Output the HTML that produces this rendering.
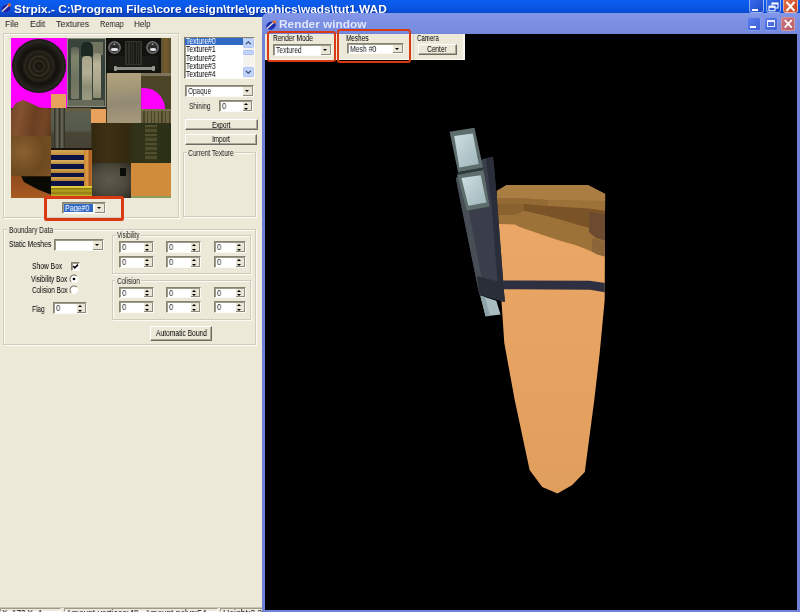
<!DOCTYPE html>
<html><head><meta charset="utf-8">
<style>
*{box-sizing:border-box;margin:0;padding:0}
html,body{width:800px;height:612px;overflow:hidden;background:#ece9d8}
body{position:relative;font-family:"Liberation Sans",sans-serif;font-size:8.5px;color:#000}
.a{position:absolute}
.t{position:absolute;white-space:nowrap;line-height:1;transform-origin:0 50%;will-change:transform}
.sunk{border:1px solid;border-color:#85836f #fbfaf4 #fbfaf4 #85836f;box-shadow:inset 1px 1px 0 #9c9a8a}
.rbtn{background:#ece9d8;border:1px solid;border-color:#fff #6e6c60 #6e6c60 #fff}
.btn{background:#ece9d8;border:1px solid;border-color:#fff #6e6c60 #6e6c60 #fff;box-shadow:inset -1px -1px 0 #aca899}
.grp{border:1px solid #cfccbb;box-shadow:inset 1px 1px 0 #fbfaf4,1px 1px 0 #fbfaf4}
</style></head><body>

<div class="a" style="left:0px;top:0px;width:800px;height:17px;background:linear-gradient(#0b5df0 0,#0a5ae8 30%,#0850dc 60%,#0a47c8 85%,#0f3fb0 100%)"></div>
<svg class="a" style="left:1px;top:3px" width="11" height="10" viewBox="0 0 11 10"><ellipse cx="5" cy="5.6" rx="5" ry="3.9" fill="#1722a6" stroke="#3c58d8" stroke-width=".5" transform="rotate(-25 5 5.6)"/><path d="M1 8.5 L7.5 2.5" stroke="#e8e0d8" stroke-width="1.4"/><circle cx="8.3" cy="1.9" r="1.6" fill="#e86a28"/></svg>
<div class="t" style="left:14.0px;top:2.8px;font-size:11.6px;color:#fff;font-weight:bold;transform:scaleX(1.024);text-shadow:1px 1px 0 rgba(10,40,140,.7);">Strpix.- C:\Program Files\core design\trle\graphics\wads\tut1.WAD</div>
<div class="a" style="left:749px;top:-3px;width:15px;height:16px;background:linear-gradient(135deg,#3a70f0,#1c46c8);border:1px solid rgba(255,255,255,.5);border-radius:3px"></div>
<div class="a" style="left:766px;top:-3px;width:15px;height:16px;background:linear-gradient(135deg,#3a70f0,#1c46c8);border:1px solid rgba(255,255,255,.5);border-radius:3px"></div>
<div class="a" style="left:783px;top:-3px;width:15px;height:16px;background:linear-gradient(135deg,#e8744c,#c8401c);border:1px solid rgba(255,255,255,.5);border-radius:3px"></div>
<div class="a" style="left:752px;top:8.5px;width:6px;height:2.5px;background:#fff"></div>
<svg class="a" style="left:766px;top:0" width="15" height="13" viewBox="0 0 15 13"><rect x="6" y="3" width="6" height="5" fill="none" stroke="#fff" stroke-width="1"/><path d="M6 3.7h6" stroke="#fff" stroke-width="1.6"/><rect x="3" y="6.2" width="6" height="4.6" fill="#2a5ad8" stroke="#fff" stroke-width="1"/><path d="M3 7h6" stroke="#fff" stroke-width="1.6"/></svg>
<svg class="a" style="left:783px;top:0" width="15" height="13" viewBox="0 0 15 13"><path d="M3.5 2 L11.5 11 M11.5 2 L3.5 11" stroke="#fff" stroke-width="2"/></svg>
<div class="a" style="left:0px;top:17px;width:263px;height:15px;background:#ece9d8"></div>
<div class="t" style="left:5.4px;top:19.6px;font-size:9px;color:#1c1c1c;transform:scaleX(0.937);">File</div>
<div class="t" style="left:30.0px;top:19.6px;font-size:9px;color:#1c1c1c;transform:scaleX(0.967);">Edit</div>
<div class="t" style="left:56.0px;top:19.6px;font-size:9px;color:#1c1c1c;transform:scaleX(0.976);">Textures</div>
<div class="t" style="left:100.0px;top:19.6px;font-size:9px;color:#1c1c1c;transform:scaleX(0.813);">Remap</div>
<div class="t" style="left:133.5px;top:19.6px;font-size:9px;color:#1c1c1c;transform:scaleX(0.897);">Help</div>
<div class="a grp" style="left:3px;top:33px;width:176px;height:185px;"></div>
<div class="a" id="tex" style="left:11px;top:38px;width:160px;height:160px;overflow:hidden;background:#3a3420">
<div class="a" style="left:0.0px;top:0.0px;width:55.5px;height:70.0px;background:#ff00ff"></div>
<div class="a" style="left:0.6px;top:0.6px;width:54.4px;height:54.0px;border-radius:50%;background:radial-gradient(circle,#26221a 0,#15130e 9%,#332c1e 13%,#1a1812 20%,#352f20 25%,#1a1812 31%,#2a261c 37%,#12110d 46%,#1b1a15 56%,#282620 64%,#191813 70%,#141410 72%)"></div>
<div class="a" style="left:0.0px;top:62.0px;width:40.5px;height:36.0px;background:linear-gradient(100deg,#74442a,#84522e 25%,#6a4022 55%,#744626 80%,#5a381c);clip-path:polygon(0 30%,12% 8%,30% 0,50% 10%,70% 20%,100% 24%,100% 100%,0 100%)"></div>
<div class="a" style="left:40.3px;top:55.6px;width:15.2px;height:14.6px;background:#e8a25e"></div>
<div class="a" style="left:56.0px;top:0.3px;width:38.6px;height:69.0px;background:linear-gradient(#3a463c,#33403a 50%,#3c463a);border:1.3px solid #8e9080"></div>
<div class="a" style="left:79.0px;top:4.0px;width:13.0px;height:13.0px;background:#7e806a;opacity:.8"></div>
<div class="a" style="left:60.2px;top:8.7px;width:7.9px;height:52.0px;background:linear-gradient(#5a6252,#80846c 20%,#6e7460 60%,#7a7c66);border-radius:3px 3px 1px 1px"></div>
<div class="a" style="left:69.5px;top:4.0px;width:12.0px;height:14.0px;background:#1c2822;border-radius:5px 5px 0 0"></div>
<div class="a" style="left:70.7px;top:17.7px;width:10.2px;height:44.0px;background:linear-gradient(#a8a48a,#b4ae94 40%,#8c8c74 70%,#9c9a82);border-radius:4px 4px 1px 1px"></div>
<div class="a" style="left:82.4px;top:15.0px;width:8.0px;height:45.0px;background:linear-gradient(#8e8e76,#bab498 25%,#a8a48a 70%,#8a8a72);border-radius:3px 3px 1px 1px"></div>
<div class="a" style="left:57.3px;top:62.3px;width:36.0px;height:5.5px;background:#666a58"></div>
<div class="a" style="left:56.0px;top:69.2px;width:39.0px;height:1.4px;background:#2a2a20"></div>
<div class="a" style="left:94.5px;top:0.0px;width:55.5px;height:35.5px;background:#12120f"></div>
<div class="a" style="left:149.7px;top:0.0px;width:10.3px;height:35.5px;background:linear-gradient(90deg,#5a5232,#7a5a2c 50%,#54502e)"></div>
<div class="a" style="left:97.0px;top:18.0px;width:50.0px;height:13.0px;background:#1a1a16"></div>
<div class="a" style="left:113.7px;top:3.0px;width:17.7px;height:23.6px;background:repeating-linear-gradient(90deg,#2e2e28 0 1.2px,#1a1a16 1.2px 2.4px);border:1px solid #34342c"></div>
<div class="a" style="left:96.9px;top:2.5px;width:13.0px;height:13.0px;border-radius:50%;background:radial-gradient(circle,#262626 0,#303030 45%,#77777a 62%,#3a3a3a 80%,#1a1a1a 100%)"></div>
<div class="a" style="left:100.3px;top:10.2px;width:6.4px;height:2.6px;border-radius:50%;background:#e8e8ea"></div>
<div class="a" style="left:102.1px;top:5.0px;width:2.6px;height:2.0px;background:#9a9a9a;clip-path:polygon(50% 0,100% 100%,0 100%)"></div>
<div class="a" style="left:135.1px;top:2.5px;width:13.0px;height:13.0px;border-radius:50%;background:radial-gradient(circle,#262626 0,#303030 45%,#77777a 62%,#3a3a3a 80%,#1a1a1a 100%)"></div>
<div class="a" style="left:138.5px;top:10.2px;width:6.4px;height:2.6px;border-radius:50%;background:#e8e8ea"></div>
<div class="a" style="left:140.3px;top:5.0px;width:2.6px;height:2.0px;background:#9a9a9a;clip-path:polygon(50% 0,100% 100%,0 100%)"></div>
<div class="a" style="left:104.0px;top:29.2px;width:38.0px;height:2.4px;background:#8c8c84;border-radius:1px"></div>
<div class="a" style="left:102.5px;top:28.2px;width:3.0px;height:4.4px;background:#9a9a92;border-radius:1px"></div>
<div class="a" style="left:140.5px;top:28.2px;width:3.0px;height:4.4px;background:#9a9a92;border-radius:1px"></div>
<div class="a" style="left:95.6px;top:35.4px;width:34.6px;height:49.6px;background:linear-gradient(175deg,#b4a27e,#a49878 30%,#938a74 60%,#a89a7a 100%)"></div>
<div class="a" style="left:130.2px;top:35.4px;width:29.8px;height:35.5px;background:#4c4428"></div>
<div class="a" style="left:130.2px;top:35.4px;width:29.8px;height:2.5px;background:#7c745a"></div>
<div class="a" style="left:112.0px;top:50.0px;width:42.0px;height:42.0px;border-radius:50%;background:#ff00ff;clip-path:inset(0 0 50% 43.3%)"></div>
<div class="a" style="left:130.2px;top:70.7px;width:29.8px;height:14.3px;background:repeating-linear-gradient(90deg,#6c6440 0 2.4px,#4a4428 2.4px 3.6px);border-top:2px solid #77704c"></div>
<div class="a" style="left:40.3px;top:70.2px;width:40.2px;height:39.6px;background:linear-gradient(#6a5c3a 0,#5a5e50 12%,#555a4e 55%,#4a4636 62%,#464234 100%)"></div>
<div class="a" style="left:42.5px;top:70.2px;width:11.0px;height:39.6px;background:linear-gradient(90deg,#2c2c24,#6c6c5c 30%,#34342a 50%,#6a6a5a 72%,#2a2a22)"></div>
<div class="a" style="left:80.2px;top:70.7px;width:15.3px;height:14.3px;background:#e8a25e"></div>
<div class="a" style="left:0.0px;top:97.8px;width:40.3px;height:39.8px;background:radial-gradient(circle at 30% 40%,#8a6030,#6e4a20 60%,#7a5226)"></div>
<div class="a" style="left:0.0px;top:137.5px;width:40.3px;height:22.5px;background:linear-gradient(#8e4c1e,#a85a22)"></div>
<div class="a" style="left:0.0px;top:137.5px;width:40.3px;height:22.5px;background:#0a0a04;clip-path:polygon(25% 3%,100% 3%,100% 86%,67% 62%,32% 29%)"></div>
<div class="a" style="left:40.3px;top:109.6px;width:40.5px;height:50.4px;background:linear-gradient(#1c1208 0 2.2px,#d4a850 2.2px,#c08c40 7.4px,#0c1244 7.4px 12.4px,#d8b060 12.4px,#b88838 16.1px,#0c1244 16.1px 21.3px,#d0a450 21.3px,#b08030 25px,#0c1244 25px 28.9px,#d4a850 28.9px,#b08030 33px,#0c1244 33px 38.2px,#e0d040 38.2px,#d8c838 40.4px,#8e7c14 40.4px,#b8a41e 43px,#8a7812 45px,#c0ac24 47.5px,#9c8a18 50.4px)"></div>
<div class="a" style="left:72.7px;top:111.8px;width:8.1px;height:36.0px;background:linear-gradient(90deg,#c87c30,#e0a048 40%,#a85c20 70%,#c07028)"></div>
<div class="a" style="left:80.5px;top:85.0px;width:79.5px;height:40.0px;background:linear-gradient(90deg,#33280f,#3e3014 20%,#33290f 45%,#30331a 55%,#2c3016 100%)"></div>
<div class="a" style="left:134.3px;top:87.0px;width:11.7px;height:36.0px;background:repeating-linear-gradient(#6e683c 0 2px,#3e3c20 2px 4px,#66623a 4px 7px,#3a3a1e 7px 9px);opacity:.55"></div>
<div class="a" style="left:80.8px;top:125.0px;width:39.2px;height:35.0px;background:radial-gradient(ellipse at 45% 50%,#5e5a4c,#4c483c 55%,#2c2a22 100%)"></div>
<div class="a" style="left:109.3px;top:130.0px;width:5.6px;height:7.5px;background:#0c0c0a"></div>
<div class="a" style="left:119.9px;top:125.0px;width:40.1px;height:33.0px;background:#d08c3a"></div>
<div class="a" style="left:119.9px;top:158.0px;width:40.1px;height:2.0px;background:#8c9c5a"></div>
</div>
<div class="a sunk" style="left:183.5px;top:36.5px;width:71px;height:42.5px;background:#fff"></div>
<div class="a" style="left:185px;top:37.6px;width:57.5px;height:7.6px;background:#316ac5"></div>
<div class="t" style="left:186.3px;top:37.2px;font-size:8.5px;color:#fff;transform:scaleX(0.795);">Texture#0</div>
<div class="t" style="left:186.3px;top:45.4px;font-size:8.5px;color:#000;transform:scaleX(0.795);">Texture#1</div>
<div class="t" style="left:186.3px;top:53.6px;font-size:8.5px;color:#000;transform:scaleX(0.795);">Texture#2</div>
<div class="t" style="left:186.3px;top:61.8px;font-size:8.5px;color:#000;transform:scaleX(0.795);">Texture#3</div>
<div class="t" style="left:186.3px;top:69.9px;font-size:8.5px;color:#000;transform:scaleX(0.795);">Texture#4</div>
<div class="a" style="left:242.5px;top:38px;width:11px;height:39.5px;background:#f4f3ee"></div>
<div class="a" style="left:243px;top:38px;width:10.5px;height:10px;background:#c2d5fc;border:1px solid #b0c4f4;border-radius:2px"></div>
<div class="a" style="left:243px;top:67px;width:10.5px;height:10px;background:#c2d5fc;border:1px solid #b0c4f4;border-radius:2px"></div>
<div class="a" style="left:243px;top:49.5px;width:10.5px;height:5.5px;background:#c2d5fc;border:1px solid #a8bcf0;border-radius:1.5px"></div>
<svg class="a" style="left:243px;top:38px" width="11" height="10" viewBox="0 0 11 10"><path d="M2.7 6.3 L5.3 3.7 L7.9 6.3" fill="none" stroke="#4d6185" stroke-width="1.5"/></svg>
<svg class="a" style="left:243px;top:67px" width="11" height="10" viewBox="0 0 11 10"><path d="M2.7 3.7 L5.3 6.3 L7.9 3.7" fill="none" stroke="#4d6185" stroke-width="1.5"/></svg>
<div class="a sunk" style="left:185px;top:85px;width:69px;height:12px;background:#fff"></div>
<div class="a" style="left:243px;top:87px;width:10px;height:9px;background:#e9e6d6;border-right:1px solid #8c8a7c;border-bottom:1px solid #8c8a7c"></div>
<div class="a" style="left:245.0px;top:90.1px;width:0;height:0;border-left:2.7px solid transparent;border-right:2.7px solid transparent;border-top:2.7px solid #000"></div>
<div class="t" style="left:187.9px;top:87.0px;font-size:8.5px;color:#1a1a1a;transform:scaleX(0.764);">Opaque</div>
<div class="t" style="left:188.6px;top:102.1px;font-size:8.5px;color:#1a1a1a;transform:scaleX(0.755);">Shining</div>
<div class="a sunk" style="left:219px;top:100px;width:34px;height:12px;background:#fff"></div>
<div class="a" style="left:243px;top:102px;width:9px;height:9px;background:#e9e6d6;border-right:1px solid #8c8a7c;border-bottom:1px solid #8c8a7c"></div>
<div class="a" style="left:244.4px;top:103.3px;width:0;height:0;border-left:2.7600000000000002px solid transparent;border-right:2.7600000000000002px solid transparent;border-bottom:2.7600000000000002px solid #000"></div>
<div class="a" style="left:244.4px;top:107.6px;width:0;height:0;border-left:2.7600000000000002px solid transparent;border-right:2.7600000000000002px solid transparent;border-top:2.7600000000000002px solid #000"></div>
<div class="t" style="left:221.9px;top:102.1px;font-size:9px;color:#2a2a2a;transform:scaleX(0.857);">0</div>
<div class="a btn" style="left:185px;top:119px;width:73px;height:11.4px;"></div>
<div class="t" style="left:212.3px;top:120.5px;font-size:8.5px;color:#000;transform:scaleX(0.745);">Export</div>
<div class="a btn" style="left:184.6px;top:133.6px;width:72.4px;height:11.8px;"></div>
<div class="t" style="left:211.9px;top:135.3px;font-size:8.5px;color:#000;transform:scaleX(0.739);">Import</div>
<div class="a grp" style="left:183.2px;top:152.4px;width:73px;height:65px;"></div>
<div class="a" style="left:186.5px;top:148.4px;width:48.7px;height:9px;background:#ece9d8"></div>
<div class="t" style="left:188.0px;top:149.2px;font-size:8.5px;color:#1a1a1a;transform:scaleX(0.782);">Current Texture</div>
<div class="a" style="left:44px;top:196.4px;width:80px;height:25px;border:3px solid #d93a14;border-radius:2.5px"></div>
<div class="a sunk" style="left:62px;top:202px;width:44px;height:12px;background:#fff"></div>
<div class="a" style="left:95px;top:204px;width:10px;height:9px;background:#e9e6d6;border-right:1px solid #8c8a7c;border-bottom:1px solid #8c8a7c"></div>
<div class="a" style="left:97.0px;top:207.1px;width:0;height:0;border-left:2.7px solid transparent;border-right:2.7px solid transparent;border-top:2.7px solid #000"></div>
<div class="a" style="left:64px;top:204px;width:29px;height:8px;background:#316ac5"></div>
<div class="t" style="left:65.2px;top:204.0px;font-size:8.5px;color:#fff;transform:scaleX(0.832);">Page#0</div>
<div class="a grp" style="left:3.2px;top:228.8px;width:253px;height:116.4px;"></div>
<div class="a" style="left:7.0px;top:224.8px;width:47.2px;height:9px;background:#ece9d8"></div>
<div class="t" style="left:8.5px;top:225.6px;font-size:8.5px;color:#1a1a1a;transform:scaleX(0.779);">Boundary Data</div>
<div class="t" style="left:8.9px;top:240.4px;font-size:8.5px;color:#000;transform:scaleX(0.789);">Static Meshes</div>
<div class="a sunk" style="left:54px;top:239px;width:50px;height:12px;background:#fff"></div>
<div class="a" style="left:93px;top:241px;width:10px;height:9px;background:#e9e6d6;border-right:1px solid #8c8a7c;border-bottom:1px solid #8c8a7c"></div>
<div class="a" style="left:95.0px;top:244.1px;width:0;height:0;border-left:2.7px solid transparent;border-right:2.7px solid transparent;border-top:2.7px solid #000"></div>
<div class="t" style="left:31.9px;top:262.2px;font-size:8.5px;color:#000;transform:scaleX(0.789);">Show Box</div>
<div class="t" style="left:31.4px;top:274.5px;font-size:8.5px;color:#000;transform:scaleX(0.761);">Visibility Box</div>
<div class="t" style="left:31.9px;top:285.6px;font-size:8.5px;color:#000;transform:scaleX(0.753);">Colision Box</div>
<div class="a sunk" style="left:71.2px;top:262.2px;width:8.6px;height:8.6px;background:#fff"></div>
<svg class="a" style="left:71.2px;top:262.2px" width="9" height="9" viewBox="0 0 9 9"><path d="M2.2 4 L3.8 5.8 L7 2.6" fill="none" stroke="#000" stroke-width="1.5"/></svg>
<svg class="a" style="left:69.4px;top:273.7px" width="10" height="10" viewBox="0 0 10 10"><circle cx="5" cy="5" r="3.6" fill="#fff"/><path d="M2.2 7.8 A3.95 3.95 0 0 1 7.8 2.2" fill="none" stroke="#77756a" stroke-width="1.1"/><path d="M7.8 2.2 A3.95 3.95 0 0 1 2.2 7.8" fill="none" stroke="#fbfaf4" stroke-width="1"/><circle cx="5" cy="5" r="1.35" fill="#000"/></svg>
<svg class="a" style="left:69.4px;top:284.8px" width="10" height="10" viewBox="0 0 10 10"><circle cx="5" cy="5" r="3.6" fill="#fff"/><path d="M2.2 7.8 A3.95 3.95 0 0 1 7.8 2.2" fill="none" stroke="#77756a" stroke-width="1.1"/><path d="M7.8 2.2 A3.95 3.95 0 0 1 2.2 7.8" fill="none" stroke="#fbfaf4" stroke-width="1"/></svg>
<div class="t" style="left:32.3px;top:305.3px;font-size:8.5px;color:#000;transform:scaleX(0.768);">Flag</div>
<div class="a sunk" style="left:53px;top:302px;width:34px;height:12px;background:#fff"></div>
<div class="a" style="left:77px;top:304px;width:9px;height:9px;background:#e9e6d6;border-right:1px solid #8c8a7c;border-bottom:1px solid #8c8a7c"></div>
<div class="a" style="left:78.4px;top:305.3px;width:0;height:0;border-left:2.7600000000000002px solid transparent;border-right:2.7600000000000002px solid transparent;border-bottom:2.7600000000000002px solid #000"></div>
<div class="a" style="left:78.4px;top:309.6px;width:0;height:0;border-left:2.7600000000000002px solid transparent;border-right:2.7600000000000002px solid transparent;border-top:2.7600000000000002px solid #000"></div>
<div class="t" style="left:55.9px;top:304.1px;font-size:9px;color:#2a2a2a;transform:scaleX(0.857);">0</div>
<div class="a grp" style="left:112.3px;top:234.6px;width:139px;height:39.7px;"></div>
<div class="a" style="left:115.5px;top:230.6px;width:25.5px;height:9px;background:#ece9d8"></div>
<div class="t" style="left:117.0px;top:231.4px;font-size:8.5px;color:#1a1a1a;transform:scaleX(0.737);">Visibility</div>
<div class="a grp" style="left:112.3px;top:279.8px;width:139px;height:40px;"></div>
<div class="a" style="left:115.4px;top:275.8px;width:25.8px;height:9px;background:#ece9d8"></div>
<div class="t" style="left:116.9px;top:276.6px;font-size:8.5px;color:#1a1a1a;transform:scaleX(0.754);">Colision</div>
<div class="a sunk" style="left:119px;top:241px;width:35px;height:12px;background:#fff"></div>
<div class="a" style="left:144px;top:243px;width:9px;height:9px;background:#e9e6d6;border-right:1px solid #8c8a7c;border-bottom:1px solid #8c8a7c"></div>
<div class="a" style="left:145.4px;top:244.3px;width:0;height:0;border-left:2.7600000000000002px solid transparent;border-right:2.7600000000000002px solid transparent;border-bottom:2.7600000000000002px solid #000"></div>
<div class="a" style="left:145.4px;top:248.6px;width:0;height:0;border-left:2.7600000000000002px solid transparent;border-right:2.7600000000000002px solid transparent;border-top:2.7600000000000002px solid #000"></div>
<div class="t" style="left:121.9px;top:243.1px;font-size:9px;color:#2a2a2a;transform:scaleX(0.857);">0</div>
<div class="a sunk" style="left:166px;top:241px;width:35px;height:12px;background:#fff"></div>
<div class="a" style="left:191px;top:243px;width:9px;height:9px;background:#e9e6d6;border-right:1px solid #8c8a7c;border-bottom:1px solid #8c8a7c"></div>
<div class="a" style="left:192.4px;top:244.3px;width:0;height:0;border-left:2.7600000000000002px solid transparent;border-right:2.7600000000000002px solid transparent;border-bottom:2.7600000000000002px solid #000"></div>
<div class="a" style="left:192.4px;top:248.6px;width:0;height:0;border-left:2.7600000000000002px solid transparent;border-right:2.7600000000000002px solid transparent;border-top:2.7600000000000002px solid #000"></div>
<div class="t" style="left:168.9px;top:243.1px;font-size:9px;color:#2a2a2a;transform:scaleX(0.857);">0</div>
<div class="a sunk" style="left:214px;top:241px;width:32px;height:12px;background:#fff"></div>
<div class="a" style="left:236px;top:243px;width:9px;height:9px;background:#e9e6d6;border-right:1px solid #8c8a7c;border-bottom:1px solid #8c8a7c"></div>
<div class="a" style="left:237.4px;top:244.3px;width:0;height:0;border-left:2.7600000000000002px solid transparent;border-right:2.7600000000000002px solid transparent;border-bottom:2.7600000000000002px solid #000"></div>
<div class="a" style="left:237.4px;top:248.6px;width:0;height:0;border-left:2.7600000000000002px solid transparent;border-right:2.7600000000000002px solid transparent;border-top:2.7600000000000002px solid #000"></div>
<div class="t" style="left:216.9px;top:243.1px;font-size:9px;color:#2a2a2a;transform:scaleX(0.857);">0</div>
<div class="a sunk" style="left:119px;top:256px;width:35px;height:12px;background:#fff"></div>
<div class="a" style="left:144px;top:258px;width:9px;height:9px;background:#e9e6d6;border-right:1px solid #8c8a7c;border-bottom:1px solid #8c8a7c"></div>
<div class="a" style="left:145.4px;top:259.3px;width:0;height:0;border-left:2.7600000000000002px solid transparent;border-right:2.7600000000000002px solid transparent;border-bottom:2.7600000000000002px solid #000"></div>
<div class="a" style="left:145.4px;top:263.6px;width:0;height:0;border-left:2.7600000000000002px solid transparent;border-right:2.7600000000000002px solid transparent;border-top:2.7600000000000002px solid #000"></div>
<div class="t" style="left:121.9px;top:258.1px;font-size:9px;color:#2a2a2a;transform:scaleX(0.857);">0</div>
<div class="a sunk" style="left:166px;top:256px;width:35px;height:12px;background:#fff"></div>
<div class="a" style="left:191px;top:258px;width:9px;height:9px;background:#e9e6d6;border-right:1px solid #8c8a7c;border-bottom:1px solid #8c8a7c"></div>
<div class="a" style="left:192.4px;top:259.3px;width:0;height:0;border-left:2.7600000000000002px solid transparent;border-right:2.7600000000000002px solid transparent;border-bottom:2.7600000000000002px solid #000"></div>
<div class="a" style="left:192.4px;top:263.6px;width:0;height:0;border-left:2.7600000000000002px solid transparent;border-right:2.7600000000000002px solid transparent;border-top:2.7600000000000002px solid #000"></div>
<div class="t" style="left:168.9px;top:258.1px;font-size:9px;color:#2a2a2a;transform:scaleX(0.857);">0</div>
<div class="a sunk" style="left:214px;top:256px;width:32px;height:12px;background:#fff"></div>
<div class="a" style="left:236px;top:258px;width:9px;height:9px;background:#e9e6d6;border-right:1px solid #8c8a7c;border-bottom:1px solid #8c8a7c"></div>
<div class="a" style="left:237.4px;top:259.3px;width:0;height:0;border-left:2.7600000000000002px solid transparent;border-right:2.7600000000000002px solid transparent;border-bottom:2.7600000000000002px solid #000"></div>
<div class="a" style="left:237.4px;top:263.6px;width:0;height:0;border-left:2.7600000000000002px solid transparent;border-right:2.7600000000000002px solid transparent;border-top:2.7600000000000002px solid #000"></div>
<div class="t" style="left:216.9px;top:258.1px;font-size:9px;color:#2a2a2a;transform:scaleX(0.857);">0</div>
<div class="a sunk" style="left:119px;top:287px;width:35px;height:11px;background:#fff"></div>
<div class="a" style="left:144px;top:289px;width:9px;height:8px;background:#e9e6d6;border-right:1px solid #8c8a7c;border-bottom:1px solid #8c8a7c"></div>
<div class="a" style="left:145.4px;top:290.0px;width:0;height:0;border-left:2.7600000000000002px solid transparent;border-right:2.7600000000000002px solid transparent;border-bottom:2.7600000000000002px solid #000"></div>
<div class="a" style="left:145.4px;top:293.9px;width:0;height:0;border-left:2.7600000000000002px solid transparent;border-right:2.7600000000000002px solid transparent;border-top:2.7600000000000002px solid #000"></div>
<div class="t" style="left:121.9px;top:288.6px;font-size:9px;color:#2a2a2a;transform:scaleX(0.857);">0</div>
<div class="a sunk" style="left:166px;top:287px;width:35px;height:11px;background:#fff"></div>
<div class="a" style="left:191px;top:289px;width:9px;height:8px;background:#e9e6d6;border-right:1px solid #8c8a7c;border-bottom:1px solid #8c8a7c"></div>
<div class="a" style="left:192.4px;top:290.0px;width:0;height:0;border-left:2.7600000000000002px solid transparent;border-right:2.7600000000000002px solid transparent;border-bottom:2.7600000000000002px solid #000"></div>
<div class="a" style="left:192.4px;top:293.9px;width:0;height:0;border-left:2.7600000000000002px solid transparent;border-right:2.7600000000000002px solid transparent;border-top:2.7600000000000002px solid #000"></div>
<div class="t" style="left:168.9px;top:288.6px;font-size:9px;color:#2a2a2a;transform:scaleX(0.857);">0</div>
<div class="a sunk" style="left:214px;top:287px;width:32px;height:11px;background:#fff"></div>
<div class="a" style="left:236px;top:289px;width:9px;height:8px;background:#e9e6d6;border-right:1px solid #8c8a7c;border-bottom:1px solid #8c8a7c"></div>
<div class="a" style="left:237.4px;top:290.0px;width:0;height:0;border-left:2.7600000000000002px solid transparent;border-right:2.7600000000000002px solid transparent;border-bottom:2.7600000000000002px solid #000"></div>
<div class="a" style="left:237.4px;top:293.9px;width:0;height:0;border-left:2.7600000000000002px solid transparent;border-right:2.7600000000000002px solid transparent;border-top:2.7600000000000002px solid #000"></div>
<div class="t" style="left:216.9px;top:288.6px;font-size:9px;color:#2a2a2a;transform:scaleX(0.857);">0</div>
<div class="a sunk" style="left:119px;top:301px;width:35px;height:12px;background:#fff"></div>
<div class="a" style="left:144px;top:303px;width:9px;height:9px;background:#e9e6d6;border-right:1px solid #8c8a7c;border-bottom:1px solid #8c8a7c"></div>
<div class="a" style="left:145.4px;top:304.3px;width:0;height:0;border-left:2.7600000000000002px solid transparent;border-right:2.7600000000000002px solid transparent;border-bottom:2.7600000000000002px solid #000"></div>
<div class="a" style="left:145.4px;top:308.6px;width:0;height:0;border-left:2.7600000000000002px solid transparent;border-right:2.7600000000000002px solid transparent;border-top:2.7600000000000002px solid #000"></div>
<div class="t" style="left:121.9px;top:303.1px;font-size:9px;color:#2a2a2a;transform:scaleX(0.857);">0</div>
<div class="a sunk" style="left:166px;top:301px;width:35px;height:12px;background:#fff"></div>
<div class="a" style="left:191px;top:303px;width:9px;height:9px;background:#e9e6d6;border-right:1px solid #8c8a7c;border-bottom:1px solid #8c8a7c"></div>
<div class="a" style="left:192.4px;top:304.3px;width:0;height:0;border-left:2.7600000000000002px solid transparent;border-right:2.7600000000000002px solid transparent;border-bottom:2.7600000000000002px solid #000"></div>
<div class="a" style="left:192.4px;top:308.6px;width:0;height:0;border-left:2.7600000000000002px solid transparent;border-right:2.7600000000000002px solid transparent;border-top:2.7600000000000002px solid #000"></div>
<div class="t" style="left:168.9px;top:303.1px;font-size:9px;color:#2a2a2a;transform:scaleX(0.857);">0</div>
<div class="a sunk" style="left:214px;top:301px;width:32px;height:12px;background:#fff"></div>
<div class="a" style="left:236px;top:303px;width:9px;height:9px;background:#e9e6d6;border-right:1px solid #8c8a7c;border-bottom:1px solid #8c8a7c"></div>
<div class="a" style="left:237.4px;top:304.3px;width:0;height:0;border-left:2.7600000000000002px solid transparent;border-right:2.7600000000000002px solid transparent;border-bottom:2.7600000000000002px solid #000"></div>
<div class="a" style="left:237.4px;top:308.6px;width:0;height:0;border-left:2.7600000000000002px solid transparent;border-right:2.7600000000000002px solid transparent;border-top:2.7600000000000002px solid #000"></div>
<div class="t" style="left:216.9px;top:303.1px;font-size:9px;color:#2a2a2a;transform:scaleX(0.857);">0</div>
<div class="a btn" style="left:149.9px;top:325.9px;width:62.3px;height:14.9px;"></div>
<div class="t" style="left:155.6px;top:329.2px;font-size:8.5px;color:#000;transform:scaleX(0.788);">Automatic Bound</div>
<div class="a" style="left:0px;top:607px;width:263px;height:5px;background:#ece9d8;border-top:1px solid #c8c5b2"></div>
<div class="a" style="left:0px;top:608px;width:61px;height:4px;border:1px solid;border-color:#9d9a8a #fff #fff #9d9a8a"></div>
<div class="a" style="left:64px;top:608px;width:153.5px;height:4px;border:1px solid;border-color:#9d9a8a #fff #fff #9d9a8a"></div>
<div class="a" style="left:220px;top:608px;width:43px;height:4px;border:1px solid;border-color:#9d9a8a #fff #fff #9d9a8a"></div>
<div class="t" style="left:1.8px;top:608.6px;font-size:9px;color:#000;transform:scaleX(0.891);">X=173 Y=4</div>
<div class="t" style="left:65.8px;top:608.6px;font-size:9px;color:#000;transform:scaleX(0.941);">Amount vertices:48</div>
<div class="t" style="left:145.0px;top:608.6px;font-size:9px;color:#000;transform:scaleX(0.917);">Amount polys:54</div>
<div class="t" style="left:222.7px;top:608.6px;font-size:9px;color:#000;transform:scaleX(0.956);">Height:2.24</div>
<div class="a" style="left:262px;top:13.3px;width:538px;height:600px;background:linear-gradient(#8498ea 0,#7b90e4 8px,#768ade 20px,#7082d8 21px);border-radius:6px 0 0 0"></div>
<div class="a" style="left:265px;top:34px;width:531.7px;height:575.8px;background:#000"></div>
<svg class="a" style="left:266px;top:19.5px" width="11" height="10" viewBox="0 0 11 10"><ellipse cx="5" cy="5.6" rx="5" ry="3.9" fill="#1a2fb0" transform="rotate(-25 5 5.6)"/><path d="M1 8.5 L7.5 2.5" stroke="#e8e0d8" stroke-width="1.4"/><circle cx="8.3" cy="1.9" r="1.6" fill="#e86a28"/></svg>
<div class="t" style="left:278.6px;top:19.2px;font-size:11.8px;color:#dfe6fb;font-weight:bold;transform:scaleX(1.004);">Render window</div>
<div class="a" style="left:746.8px;top:17px;width:14.4px;height:13.6px;background:linear-gradient(135deg,#5a7cec,#4060d8);border:1px solid rgba(255,255,255,.28);border-radius:2.5px"></div>
<div class="a" style="left:763.8px;top:17px;width:14.4px;height:13.6px;background:linear-gradient(135deg,#5a7cec,#4060d8);border:1px solid rgba(255,255,255,.28);border-radius:2.5px"></div>
<div class="a" style="left:780.6px;top:17px;width:14.4px;height:13.6px;background:linear-gradient(135deg,#cc7680,#b85c66);border:1px solid rgba(255,255,255,.28);border-radius:2.5px"></div>
<div class="a" style="left:749.8px;top:26px;width:5.8px;height:2.2px;background:#fff"></div>
<div class="a" style="left:767.4px;top:19.6px;width:7.6px;height:7.8px;border:1px solid #e8ecfc;border-top:2.2px solid #e8ecfc"></div>
<svg class="a" style="left:780.6px;top:17px" width="15" height="14" viewBox="0 0 15 14"><path d="M3.7 3 L10.8 10.6 M10.8 3 L3.7 10.6" stroke="#fff" stroke-width="1.8"/></svg>
<div class="a" style="left:265px;top:34px;width:200px;height:25.6px;background:#ece9d8;box-shadow:inset -2px -1px 0 #f8f7f0"></div>
<div class="a" style="left:337.5px;top:34px;width:1px;height:25.6px;background:#d8d5c4"></div>
<div class="a" style="left:412.5px;top:34px;width:1px;height:25.6px;background:#d8d5c4"></div>
<div class="t" style="left:273.0px;top:34.4px;font-size:8.5px;color:#000;transform:scaleX(0.776);">Render Mode</div>
<div class="a sunk" style="left:273px;top:44px;width:59px;height:12px;background:#fff"></div>
<div class="a" style="left:321px;top:46px;width:10px;height:9px;background:#e9e6d6;border-right:1px solid #8c8a7c;border-bottom:1px solid #8c8a7c"></div>
<div class="a" style="left:323.0px;top:49.1px;width:0;height:0;border-left:2.7px solid transparent;border-right:2.7px solid transparent;border-top:2.7px solid #000"></div>
<div class="t" style="left:275.9px;top:46.0px;font-size:8.5px;color:#1a1a1a;transform:scaleX(0.788);">Textured</div>
<div class="t" style="left:346.0px;top:34.3px;font-size:8.5px;color:#000;transform:scaleX(0.753);">Meshes</div>
<div class="a sunk" style="left:347px;top:43px;width:57px;height:11px;background:#fff"></div>
<div class="a" style="left:393px;top:45px;width:10px;height:8px;background:#e9e6d6;border-right:1px solid #8c8a7c;border-bottom:1px solid #8c8a7c"></div>
<div class="a" style="left:395.0px;top:47.6px;width:0;height:0;border-left:2.7px solid transparent;border-right:2.7px solid transparent;border-top:2.7px solid #000"></div>
<div class="t" style="left:349.9px;top:44.5px;font-size:8.5px;color:#1a1a1a;transform:scaleX(0.807);">Mesh #0</div>
<div class="t" style="left:417.2px;top:34.4px;font-size:8.5px;color:#000;transform:scaleX(0.721);">Camera</div>
<div class="a btn" style="left:417.8px;top:44px;width:39px;height:10.6px;"></div>
<div class="t" style="left:427.4px;top:45.1px;font-size:8.5px;color:#000;transform:scaleX(0.772);">Center</div>
<div class="a" style="left:266.6px;top:30.8px;width:69.6px;height:30.8px;border:2.8px solid #d93a14;border-radius:3px"></div>
<div class="a" style="left:337px;top:29.4px;width:73.6px;height:33.6px;border:2.8px solid #d93a14;border-radius:3px"></div>
<svg class="a" style="left:400px;top:100px" width="260" height="420" viewBox="400 100 260 420">
<defs>
<linearGradient id="sk" x1="0" y1="0" x2="0" y2="1"><stop offset="0" stop-color="#eca866"/><stop offset=".35" stop-color="#e8a462"/><stop offset="1" stop-color="#e09e5c"/></linearGradient>
<clipPath id="th"><polygon points="496.9,191 506.8,184.9 587.6,184.9 605.1,194 604.7,300 599.6,354 594.3,400 584.8,471.9 571.9,485.3 557.5,493.4 542.2,487.1 529.6,470 518.7,418.7 514.7,400 504.3,343 501.4,300 497,225"/></clipPath>
<linearGradient id="gl" x1="0" y1="0" x2="1" y2="1"><stop offset="0" stop-color="#cfdfe3"/><stop offset=".5" stop-color="#b6cace"/><stop offset="1" stop-color="#a2b8bc"/></linearGradient>
</defs>
<g clip-path="url(#th)">
<rect x="490" y="180" width="120" height="320" fill="url(#sk)"/>
<!-- shorts base (tan) -->
<polygon points="490,180 610,180 610,257 605,256 596.8,254.3 587.6,249.7 575.4,245.1 561.7,241.3 548,236.7 532.7,231.4 519,226.8 515,224.5 499,224 490,224" fill="#9c7238"/>
<!-- top lighter band -->
<polygon points="490,180 610,180 610,201 590,200.5 560,200 548,200 520,198 490,198" fill="#aa7e42"/>
<!-- second band -->
<polygon points="490,198 520,198 548,200 548,206 523,204.5 497,204.7 490,205" fill="#946a34"/>
<!-- left darkish -->
<polygon points="490,204 523.5,204 523.5,211 515,215 490,215" fill="#8a6230"/>
<!-- dark wedge -->
<polygon points="523.5,204 548,206 589,208.5 606,211 606,236 590.7,228.3 575,224 560,219.5 545,215.5 523.5,210.8" fill="#7a5426"/>
<!-- right side purple-brown -->
<polygon points="589,212 606,214 606,241 596,238 589,232" fill="#6c4b30"/>
<polygon points="592,238 606,242 606,257 596.8,254.3 592,251" fill="#8c6638"/>
<!-- strap -->
<polygon points="500,280.4 589.8,280.7 606,283.2 606,292.4 589.8,289.8 500,289.2" fill="#2e3042"/>
</g>
<!-- holster -->
<polygon points="455.8,178 483,159 493,156.8 497,200 504.8,302 479.3,294.5 461,205" fill="#3a3e4a"/>
<polygon points="455.8,178 462,176 485,295 479.3,294.5" fill="#474e56"/>
<polygon points="486,158.5 493,156.8 497,200 504.8,302 499,300.3 491,200" fill="#2a2e3a"/>
<polygon points="477,276 503,283 504.8,302 479.3,294.5" fill="#2a2e38"/>
<!-- barrel -->
<polygon points="480.3,295.5 496.3,300.8 500.5,314.6 485.6,316.3" fill="#a9bdc1"/>
<polygon points="480.3,295.5 485,297 490,316 485.6,316.3" fill="#8ea4a8"/>
<!-- gun top frames -->
<polygon points="449.6,131.8 474.4,127.8 483.1,167.4 458.1,172.3" fill="#5d6e6c"/>
<polygon points="454.2,136 472.8,133.4 478.7,164.1 459.4,167.4" fill="url(#gl)"/>
<polygon points="457,174.7 483.5,170 489.6,206.6 466.8,210.7" fill="#5d6e6c"/>
<polygon points="461.4,178 480.7,175.2 486.4,202.5 468.4,205.8" fill="url(#gl)"/>
<polygon points="458.1,172.3 483.1,167.4 483.5,170 457,174.7" fill="#2e3a3a"/>
</svg>
</body></html>
